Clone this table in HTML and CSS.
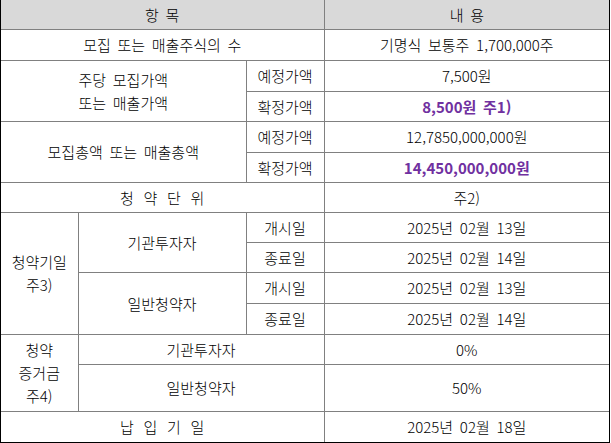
FILE: index.html
```html
<!DOCTYPE html>
<html lang="ko">
<head>
<meta charset="utf-8">
<title>청약 개요</title>
<link rel="stylesheet" href="styles.css">
</head>
<body>
<div class="frame">
<table class="info">
  <colgroup>
    <col class="c1"><col class="c2"><col class="c3"><col class="c4">
  </colgroup>
  <thead>
    <tr class="r29"><th colspan="3">항 목</th><th>내 용</th></tr>
  </thead>
  <tbody>
    <tr class="r31"><td colspan="3">모집 또는 매출주식의 수</td><td>기명식 보통주 1,700,000주</td></tr>
    <tr class="r31"><td colspan="2" rowspan="2">주당 모집가액<br>또는 매출가액</td><td>예정가액</td><td>7,500원</td></tr>
    <tr class="r30"><td>확정가액</td><td class="hl">8,500원 주1)</td></tr>
    <tr class="r31"><td colspan="2" rowspan="2">모집총액 또는 매출총액</td><td>예정가액</td><td>12,7850,000,000원</td></tr>
    <tr class="r30"><td>확정가액</td><td class="hl">14,450,000,000원</td></tr>
    <tr class="r30"><td colspan="3" class="wide">청 약 단 위</td><td>주2)</td></tr>
    <tr class="r30"><td rowspan="4">청약기일<br>주3)</td><td rowspan="2">기관투자자</td><td>개시일</td><td>2025년 02월 13일</td></tr>
    <tr class="r30"><td>종료일</td><td>2025년 02월 14일</td></tr>
    <tr class="r31"><td rowspan="2">일반청약자</td><td>개시일</td><td>2025년 02월 13일</td></tr>
    <tr class="r31"><td>종료일</td><td>2025년 02월 14일</td></tr>
    <tr class="r30"><td rowspan="2">청약<br>증거금<br>주4)</td><td colspan="2">기관투자자</td><td>0%</td></tr>
    <tr class="r47"><td colspan="2">일반청약자</td><td>50%</td></tr>
    <tr class="r31"><td colspan="3" class="wide">납 입 기 일</td><td>2025년 02월 18일</td></tr>
  </tbody>
</table>
</div>
</body>
</html>
```

FILE: styles.css
```css
html, body {
  margin: 0;
  padding: 0;
  background: #ffffff;
}

body {
  font-family: "Noto Sans CJK KR", "Noto Sans", sans-serif;
  font-size: 15px;
  color: #000000;
}

.frame {
  width: 608px;
  border-left: 1px solid #000000;
  border-right: 1px solid #000000;
  border-bottom: 1px solid #000000;
}

.info {
  width: 608px;
  border-collapse: collapse;
  border-style: hidden;
  table-layout: fixed;
}

.c1 { width: 77px; }
.c2 { width: 168px; }
.c3 { width: 78px; }
.c4 { width: 285px; }

.info th,
.info td {
  border: 1px solid #808080;
  padding: 0;
  text-align: center;
  vertical-align: middle;
  line-height: 23px;
  font-weight: 300;
  word-spacing: 2.5px;
  white-space: nowrap;
}

.info thead th {
  background: #d9d9d9;
}

.info .hl {
  color: #7030a0;
  font-weight: bold;
}

.info .wide {
  word-spacing: 5.5px;
}

.r29 { height: 29px; }
.r30 { height: 30px; }
.r31 { height: 31px; }
.r47 { height: 47px; }
```
